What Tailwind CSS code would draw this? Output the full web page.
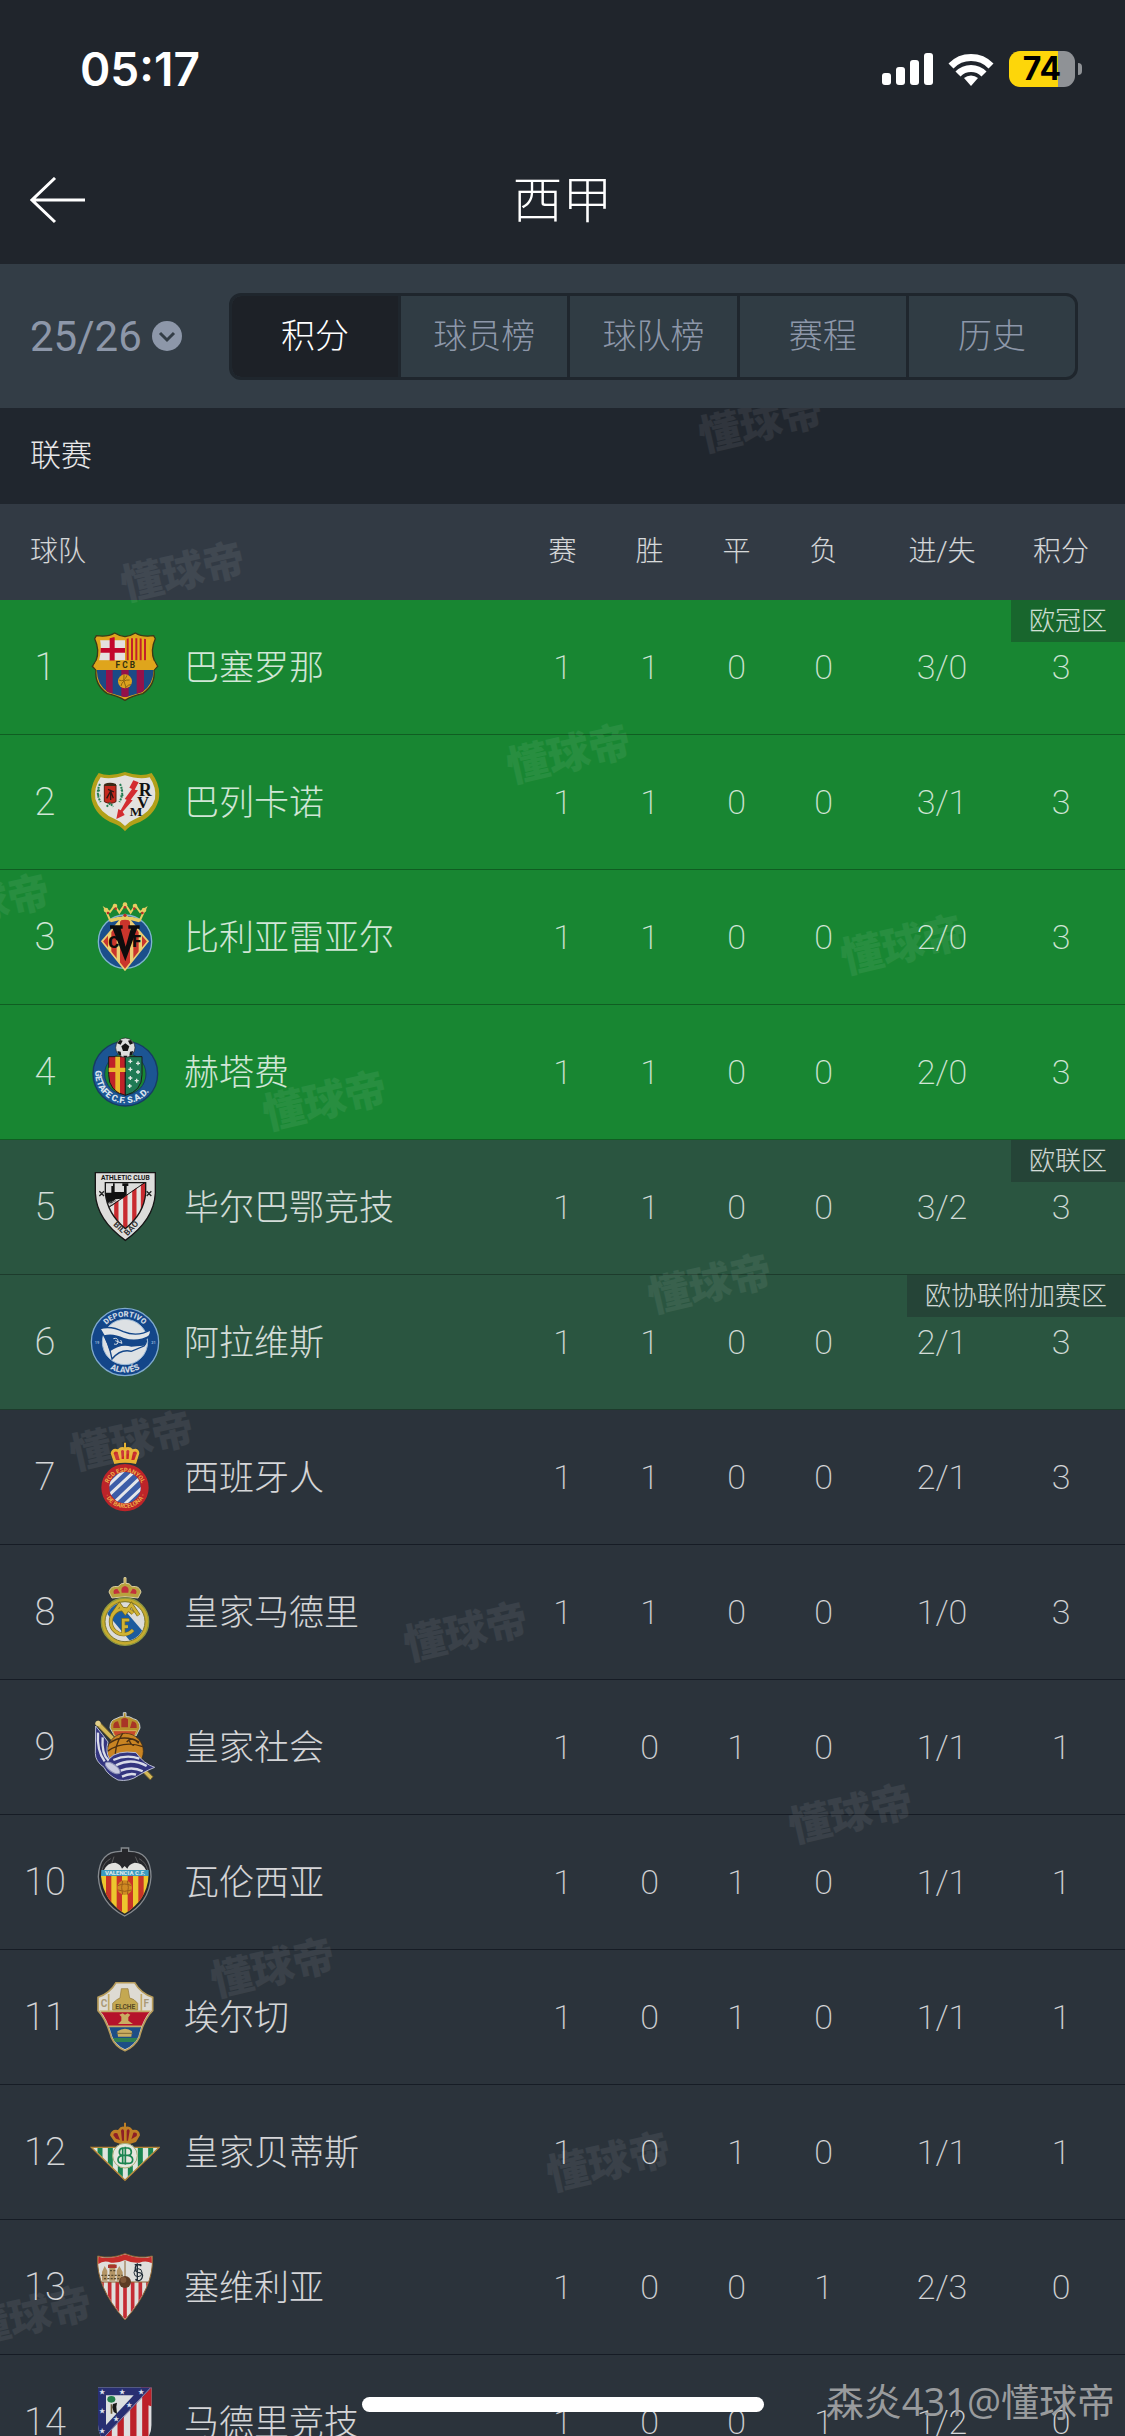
<!DOCTYPE html>
<html lang="zh-CN">
<head>
  <meta charset="UTF-8" />
  <meta name="viewport" content="width=device-width, initial-scale=1" />
  <title>西甲积分榜</title>
  <script src="https://cdn.jsdelivr.net/npm/@tailwindcss/browser@4"></script>
</head>
<body class="bg-[#2b333b] font-['Roboto','Noto_Sans_CJK_SC',sans-serif] font-light text-white">

  <!-- Club crests -->
  <svg class="absolute size-0" xmlns="http://www.w3.org/2000/svg">
    <symbol id="barcelona" viewBox="88 96 210 210">
      <clipPath id="barcelona-clip"><path d="M118 118Q150 118 162 108Q178 112 193 118Q210 112 224 108Q238 118 270 118Q262 150 272 182Q280 192 278 202Q282 250 245 276Q215 286 193 292Q170 286 141 276Q105 250 109 202Q107 192 115 182Q124 150 118 118Z" /></clipPath>
      <path d="M107 107Q142 112 162 99Q176 108 193 110Q210 108 224 99Q244 112 279 107L284 116Q268 150 281 182L291 199L280 210Q285 254 246 281Q215 287 193 301Q170 287 140 281Q101 254 106 210L95 199L106 182Q118 150 102 116Z" fill="#dfa51c" stroke="#3b3a17" stroke-width="4" />
      <g clip-path="url(#barcelona-clip)">
        <path d="M118 121h75v60h-80z" fill="#e4e1df" />
        <path d="M147 112h15v70h-15z M110 144h83v14h-83z" fill="#c3062b" />
        <path d="M196 115h80v66h-80z" fill="#e5ae1c" />
        <path d="M201 115v66M214 115v66M227 115v66M240 115v66M253 115v66" stroke="#c3202a" stroke-width="6" />
        <path d="M100 210h190v90H100z" fill="#1b4a86" />
        <path d="M136 210h20v90h-20z M182 210h22v90h-22z M228 210h22v90h-22z" fill="#94124a" />
      </g>
      <path d="M107 182h173l8 17-9 11H108l-9-11z" fill="#dfa51c" />
      <text x="194" y="204" font-size="25" font-weight="700" text-anchor="middle" fill="#33300f">F C B</text>
      <circle cx="193" cy="244" r="21" fill="#dca31f" />
      <path d="M175 240q16 8 24-14M181 258q4-20 26-18M193 264q12-12 18-10M190 224q-4 18 6 38" fill="none" stroke="#8d6611" stroke-width="3" />
    </symbol>

    <symbol id="rayo" viewBox="88 501 210 210">
      <path d="M114 519Q146 532 193 516Q240 532 273 519Q302 558 294 600Q280 650 228 670Q206 678 193 694Q180 678 158 670Q106 650 93 600Q85 558 114 519Z" fill="#b2a019" />
      <path d="M120 532Q150 540 193 526Q236 540 267 532Q288 562 283 597Q270 638 222 658Q203 666 193 678Q183 666 164 658Q116 638 104 597Q99 562 120 532Z" fill="#e3e1de" />
      <path d="M131 555h35v50q-17 10-35 0z" fill="#c5281d" stroke="#5d1b12" stroke-width="3" />
      <path d="M131 552q17-8 35 0v6h-35z" fill="#3b2a16" />
      <path d="M138 595l12-22 8 22M142 568l18 8M150 570v30" fill="none" stroke="#2e1713" stroke-width="4" />
      <path d="M118 552q-14 28 2 54M178 552q14 28-2 54M112 570l8 4M110 585l10 2M186 570l-8 4M188 585l-10 2M138 620l10-10 10 10" fill="none" stroke="#237d52" stroke-width="6" stroke-dasharray="6 3" />
      <path d="M218 541l16 6-12 22 10 2-22 28 6 2-30 34 6 10-25 12 6-30 7 4 18-32-6-2 22-30-8-4z" fill="#d32c30" />
      <text x="234" y="589" font-family="Liberation Serif" font-size="54" font-weight="700" fill="#111">R</text>
      <text x="229" y="625" font-family="Liberation Serif" font-size="50" font-weight="700" fill="#111">V</text>
      <text x="207" y="648" font-family="Liberation Serif" font-size="40" font-weight="700" fill="#111">M</text>
    </symbol>

    <symbol id="villarreal" viewBox="88 96 210 210">
      <circle cx="193" cy="215" r="80" fill="#1b4f8b" stroke="#7fb4cf" stroke-width="4" />
      <path d="M193 134L262 214L193 300L124 214Z" fill="#c9352c" stroke="#edcf73" stroke-width="5" />
      <clipPath id="villarreal-clip"><path d="M193 134L262 214L193 300L124 214Z" /></clipPath>
      <path clip-path="url(#villarreal-clip)" d="M147 130v170M173 130v170M213 130v170M239 130v170" stroke="#edcf73" stroke-width="10" />
      <path d="M133 116l16 36q44-16 88 0l17-36-16 10-14-20-14 22-17-26-17 26-14-22-14 20z" fill="none" stroke="#e8cd62" stroke-width="6" />
      <path d="M149 152q44-16 88 0" fill="none" stroke="#e8cd62" stroke-width="10" />
      <g fill="#e8cd62"><circle cx="136" cy="120" r="7" /><circle cx="163" cy="108" r="7" /><circle cx="193" cy="104" r="7" /><circle cx="223" cy="108" r="7" /><circle cx="250" cy="120" r="7" /></g>
      <g fill="#b92d28"><circle cx="142" cy="129" r="4" /><circle cx="165" cy="116" r="4" /><circle cx="193" cy="112" r="4" /><circle cx="221" cy="116" r="4" /><circle cx="245" cy="129" r="4" /><circle cx="193" cy="136" r="5" /></g>
      <path d="M148 166h38v10h-6l15 54 15-54h-7v-10h34v10h-8l-35 98-38-98h-8z" fill="#0d0c0c" />
      <text x="143" y="233" font-size="50" font-weight="900" fill="#0d0c0c">C</text>
      <text x="215" y="232" font-size="48" font-weight="900" fill="#0d0c0c">F</text>
    </symbol>

    <symbol id="getafe" viewBox="88 501 210 210">
      <circle cx="194" cy="611" r="97" fill="#1c5593" stroke="#173b62" stroke-width="4" />
      <circle cx="194" cy="612" r="62" fill="#188632" stroke="#173b62" stroke-width="3" />
      <path d="M144 560h50v116q-50-12-50-62z" fill="#bf2228" stroke="#1a1a1a" stroke-width="3" />
      <path d="M194 560h50v54q0 50-50 62z" fill="#1f7a54" stroke="#1a1a1a" stroke-width="3" />
      <path d="M164 560h14v110l-14-10z M144 593h50v13h-50z" fill="#e9b92b" />
      <path d="M203 574h12M209 568v12M226 580h12M232 574v12M203 598h12M209 592v12M226 606h12M232 600v12M203 624h12M209 618v12M222 632h12M228 626v12M201 648h12M207 642v12" stroke="#dfe8e2" stroke-width="4" />
      <circle cx="194" cy="533" r="29" fill="#dedede" stroke="#222" stroke-width="2" />
      <path d="M194 520l12 9-5 14h-14l-5-14zM170 520l8-10 8 2-6 12zM218 520l-8-10-8 2 6 12zM170 543l10 2 2 12-8-3zM218 543l-10 2-2 12 8-3zM188 557h12l-2 5h-8z" fill="#151515" />
      <path id="getafe-arc" d="M106 590A90 90 0 1 0 282 592" fill="none" />
      <text font-size="27" font-weight="900" fill="#d7e3ee"><textPath href="#getafe-arc" startOffset="12">GETAFE C.F. S.A.D.</textPath></text>
    </symbol>

    <symbol id="athletic" viewBox="88 96 210 210">
      <path d="M104 98H284V160Q280 240 194 301Q108 240 104 160Z" fill="#dddddb" stroke="#161616" stroke-width="4" />
      <clipPath id="athletic-clip"><path d="M134 128H255V160Q250 220 194 266Q140 220 134 160Z" /></clipPath>
      <g clip-path="url(#athletic-clip)">
        <path d="M130 120h130v160H130z" fill="#e5e3e1" />
        <path d="M167 160v120M194 150v130M221 140v140M247 120v160" stroke="#c92a2f" stroke-width="13" />
        <path d="M130 120H262L134 208Z" fill="#dcdcdb" />
        <path d="M134 158h18v-20h5v-8h5v26h28v-18h-5v-8h18v8h-5v26l-14 12-20 2-10 12h-20z" fill="#111" />
        <path d="M140 190l26-8M144 199l18-8" stroke="#777" stroke-width="5" stroke-dasharray="3 2" />
        <path d="M258 124L136 208" stroke="#161616" stroke-width="3" />
      </g>
      <path d="M134 128H255V160Q250 220 194 266Q140 220 134 160Z" fill="none" stroke="#161616" stroke-width="4" />
      <text x="194" y="120" font-size="20" font-weight="700" text-anchor="middle" fill="#151515">ATHLETIC CLUB</text>
      <path d="M116 154l14 14M130 154l-14 14M258 154l14 14M272 154l-14 14" stroke="#222" stroke-width="4" />
      <path id="athletic-left" d="M150 248L196 292" fill="none" /><path id="athletic-right" d="M198 292L244 242" fill="none" />
      <g font-size="25" font-weight="700" fill="#333"><text><textPath href="#athletic-left" startOffset="10">BIL</textPath></text><text><textPath href="#athletic-right" startOffset="4">BAO</textPath></text></g>
    </symbol>

    <symbol id="alaves" viewBox="88 501 210 210">
      <circle cx="193" cy="606" r="101" fill="#134689" stroke="#7fa9cd" stroke-width="4" />
      <circle cx="193" cy="606" r="68" fill="#dde1e4" stroke="#9cb9d6" stroke-width="3" />
      <path d="M118 566Q150 556 188 575Q230 592 270 570Q270 592 254 596Q262 604 250 618L212 634Q180 626 154 657Q146 610 118 566Z" fill="#e2e5e7" stroke="#134689" stroke-width="4" />
      <path d="M130 586Q156 578 190 594Q230 606 268 586L256 600Q258 612 248 617Q226 618 212 620Q180 610 148 634Z" fill="#134689" />
      <path d="M158 596q14-4 14 8t-12 8M164 602l20 8-4-10" fill="none" stroke="#d7dee5" stroke-width="3" />
      <path id="alaves-top" d="M117 606A76 76 0 0 1 269 606" fill="none" />
      <path id="alaves-bottom" d="M101 606A92 92 0 0 0 285 606" fill="none" />
      <g font-size="23" font-weight="900" fill="#cbd6e2" text-anchor="middle">
        <text><textPath href="#alaves-top" startOffset="50%">DEPORTIVO</textPath></text>
        <text font-size="25"><textPath href="#alaves-bottom" startOffset="50%">ALAVÉS</textPath></text>
      </g>
      <g font-size="12" font-weight="700" fill="#8fb0d2"><text x="102" y="611">19</text><text x="272" y="611">21</text></g>
    </symbol>

    <symbol id="espanyol" viewBox="88 96 210 210">
      <path d="M161 162L150 130Q154 112 172 118Q180 108 190 112V98h6v14Q208 108 216 118Q234 112 236 130L226 162Q193 154 161 162Z" fill="#e6b231" />
      <path d="M166 150l-7-20q2-8 12-4l6 24zM183 147l-2-24q5-6 9 0v24zM197 147v-24q5-6 9 0l-2 24zM212 150l5-24q10-4 12 4l-8 20z" fill="#c82a2a" />
      <circle cx="193" cy="233" r="71" fill="#bd2429" />
      <clipPath id="espanyol-clip"><circle cx="193" cy="233" r="47" /></clipPath>
      <g clip-path="url(#espanyol-clip)"><path d="M140 180h110v110H140z" fill="#3c5da8" /><path d="M132 236l70-66M138 262l90-84M158 280l84-80M184 290l70-66" stroke="#e4e6ea" stroke-width="9" /></g>
      <path id="espanyol-top" d="M139 240A54 54 0 1 1 247 240" fill="none" />
      <path id="espanyol-bottom" d="M127 228A66 66 0 1 0 259 228" fill="none" />
      <g font-size="18" font-weight="700" fill="#edb24a" text-anchor="middle"><text><textPath href="#espanyol-top" startOffset="50%">RCD ESPANYOL</textPath></text><text><textPath href="#espanyol-bottom" startOffset="50%">· DE BARCELONA ·</textPath></text></g>
    </symbol>

    <symbol id="madrid" viewBox="88 501 210 210">
      <path d="M154 564L145 546Q150 526 172 530Q182 518 190 520V503h6v17Q206 518 214 530Q236 526 241 546L232 564Q193 556 154 564Z" fill="#b9a23e" stroke="#ddd0a0" stroke-width="3" />
      <path d="M160 552q-6-14 10-16l8 14zM183 548q-4-18 10-20 14 2 10 20zM208 550l8-14q16 2 10 16z" fill="#c2303c" />
      <circle cx="193" cy="635" r="71" fill="#c5ab2f" stroke="#8d9740" stroke-width="4" />
      <circle cx="193" cy="635" r="60" fill="#dcdcda" stroke="#7d7729" stroke-width="3" />
      <clipPath id="madrid-clip"><circle cx="193" cy="635" r="58" /></clipPath>
      <path clip-path="url(#madrid-clip)" d="M130 600L166 570L250 668L214 700Z" fill="#1c5b9e" />
      <g fill="none" stroke="#7d6b1c" stroke-width="12"><path d="M217 610A38 38 0 1 0 217 660" /><path d="M154 616l22-32 18 24 18-24 22 32M188 672v-42h16M188 650h12" /></g>
      <g fill="none" stroke="#d0b234" stroke-width="8"><path d="M217 610A38 38 0 1 0 217 660" /><path d="M154 616l22-32 18 24 18-24 22 32M188 674v-44h18M188 650h14" /></g>
    </symbol>

    <symbol id="sociedad" viewBox="88 96 210 210">
      <path d="M104 132l9-10 164 168-8 10z" fill="#d4b857" stroke="#6a5a2c" stroke-width="3" />
      <circle cx="112" cy="130" r="8" fill="#e2cf8b" />
      <path d="M162 168l-14-24q0-24 18-28Q180 108 188 110V98h8v12Q206 108 218 116Q238 120 238 144L226 168Z" fill="#b7902c" stroke="#c9cfd0" stroke-width="3" />
      <path d="M158 144q-2-20 14-20l6 20zM182 142v-24q10-8 20 0v24zM208 144l6-20q16 0 14 20z" fill="#a83426" />
      <path d="M156 152h72l-6 16h-60z" fill="#c94a2c" stroke="#d4b857" stroke-width="3" />
      <circle cx="194" cy="214" r="54" fill="#c98422" stroke="#3a2a16" stroke-width="2" />
      <path d="M146 190q40-30 90-4M140 214q50-34 106-14M186 160q-28 40-20 76M198 186q16-20 36 4M206 182q6 14 14 14" fill="none" stroke="#4b2f12" stroke-width="4" />
      <path d="M105 138Q128 166 142 186Q134 214 146 236Q168 210 226 218Q250 252 282 262Q256 272 234 286Q206 306 172 300Q140 284 130 262Q104 244 104 220Z" fill="#33357f" stroke="#b9bdd2" stroke-width="3" />
      <path d="M112 158q-4 54 20 86M126 172q-4 50 18 70M158 240q40-18 78-4M166 256q46-24 92 2M180 272q36-14 66 2M184 290q24-12 42-6" fill="none" stroke="#d9dce8" stroke-width="7" />
      <ellipse cx="156" cy="264" rx="26" ry="11" transform="rotate(35 156 264)" fill="#c9cbe0" stroke="#8f94b8" stroke-width="3" />
    </symbol>

    <symbol id="valencia" viewBox="88 501 210 210">
      <path d="M182 504h22v10Q270 512 271 590Q266 670 192 708Q118 670 113 590Q116 512 182 514Z" fill="#26272b" stroke="#858a8f" stroke-width="4" />
      <path d="M130 570Q140 548 164 548Q180 552 184 566L192 558L200 566Q204 552 222 548Q246 548 256 570Z" fill="#e2e2df" />
      <path d="M122 570h142v18H121z" fill="#3d9cc0" />
      <clipPath id="valencia-clip"><path d="M121 588H264Q258 662 192 701Q128 662 121 588Z" /></clipPath>
      <g clip-path="url(#valencia-clip)"><path d="M110 586h170v120H110z" fill="#edc62e" /><path d="M144 586v120M176 586v120M209 586v120M241 586v120" stroke="#c93427" stroke-width="16" /></g>
      <text x="193" y="585" font-size="18" font-weight="900" text-anchor="middle" fill="#d8e6ea">VALENCIA C.F.</text>
      <circle cx="192" cy="623" r="22" fill="#d08a22" />
      <path d="M172 617q20-10 40 0M172 630q20 8 40 0M186 602q-6 20 0 42M200 602q6 20 0 42" fill="none" stroke="#9b5d18" stroke-width="3" />
      <path d="M150 536q-20 10-26 34M235 536q20 10 26 34M160 530l-6 18M224 530l8 18" fill="none" stroke="#777" stroke-width="2" />
    </symbol>

    <symbol id="elche" viewBox="88 96 210 210">
      <path d="M166 98H222Q240 130 276 142V182Q250 206 236 262Q222 290 193 302Q164 290 152 262Q136 206 112 182V142Q148 130 166 98Z" fill="#dedbd3" stroke="#b79c5b" stroke-width="5" />
      <clipPath id="elche-clip"><path d="M116 180H272Q246 206 233 260Q219 287 193 298Q167 287 155 260Q140 206 116 180Z" /></clipPath>
      <g clip-path="url(#elche-clip)">
        <path d="M110 186h170v42H110z" fill="#b5122b" />
        <path d="M110 230h170v80H110z" fill="#1d4e86" />
        <path d="M110 264h170v12H110z" fill="#2f8050" />
        <path d="M110 184h170M110 229h170" stroke="#c3a965" stroke-width="5" />
      </g>
      <path d="M144 132v50M242 132v50" stroke="#c3a965" stroke-width="5" />
      <path d="M156 160q14-14 22-16l4-28h20l5 28q14 2 24 16v20h-75z" fill="#c4a851" stroke="#94793a" stroke-width="2" />
      <path d="M172 222l10-10v-12l-6-6 10-4 7 4 8-4 8 4-6 8v10l14 10zM170 244q24-16 44 0l-2 16h-40z" fill="#c9ad62" />
      <path d="M168 250h48" stroke="#806a35" stroke-width="3" />
      <g font-weight="700" font-size="30" fill="#aa9a79" text-anchor="middle"><text x="130" y="171">C</text><text x="257" y="171">F</text><text x="194" y="176" font-size="20" fill="#594b25">ELCHE</text></g>
    </symbol>

    <symbol id="betis" viewBox="88 501 210 210">
      <path d="M162 576L148 556Q152 536 172 540Q180 528 190 530V518h6v12Q208 528 216 540Q236 536 238 556L226 576Q193 590 162 576Z" fill="#bf7f25" />
      <path d="M166 566l-8-10q0-10 12-6l8 20zM184 572l-3-30q5-8 9 0v30zM198 572v-30q5-8 9 0l-5 30zM212 568l6-20q14-2 10 10z" fill="#8d1f26" />
      <path d="M92 592H296L193 691Z" fill="#dfe5df" />
      <clipPath id="betis-clip"><path d="M97 594H291L193 688Z" /></clipPath>
      <path clip-path="url(#betis-clip)" d="M118 590v110M149 590v110M179 590v110M209 590v110M239 590v110M270 590v110" stroke="#1b8450" stroke-width="15" />
      <path d="M92 592H296L193 691Z" fill="none" stroke="#b48435" stroke-width="4" />
      <circle cx="193" cy="617" r="37" fill="#e5e7df" stroke="#a7ae78" stroke-width="3" />
      <g fill="none" stroke="#1b8450" stroke-width="5"><path d="M186 594h16q10 2 10 12t-10 10q14 2 14 13t-14 11h-16zM202 594h-16q-10 2-10 12t10 10q-14 2-14 13t14 11h16M180 616h30M194 590v54" /></g>
    </symbol>

    <symbol id="sevilla" viewBox="88 96 210 210">
      <path d="M111 108Q150 118 193 101Q236 118 275 108Q282 200 193 300Q104 200 111 108Z" fill="#dfdfdc" stroke="#8c6432" stroke-width="3" />
      <clipPath id="sevilla-clip"><path d="M113 110Q150 120 193 103Q236 120 273 110Q280 200 193 297Q106 200 113 110Z" /></clipPath>
      <g clip-path="url(#sevilla-clip)">
        <path d="M110 100h170v34q-20-16-44-6-22 2-43-8-20 10-42 8-22-10-41 6z" fill="#c52d2a" />
        <path d="M124 186v114M147 186v114M170 186v114M193 186v114M216 186v114M239 186v114M262 186v114" stroke="#c52d35" stroke-width="11" />
        <path d="M100 186H285M193 122v64" stroke="#8c6432" stroke-width="3" />
      </g>
      <path d="M124 182v-26l8-18 8 14v30zM146 182v-50h18v50zM168 182v-30l8-14 10 18v26z" fill="#b49565" />
      <path d="M142 134h26v10h-26z" fill="#a9352b" />
      <path d="M122 166h64M130 176h50M148 152h16" stroke="#594b31" stroke-width="4" stroke-dasharray="6 4" />
      <path d="M242 138q-16-10-18 4t12 16 8 16-20 4M230 130v50M222 134h20" fill="none" stroke="#222e38" stroke-width="4" />
      <circle cx="232" cy="158" r="12" fill="none" stroke="#222e38" stroke-width="3" />
      <circle cx="193" cy="186" r="18" fill="#5c3b24" /><circle cx="188" cy="180" r="9" fill="#80583a" />
    </symbol>

    <symbol id="atletico" viewBox="88 96 210 210">
      <clipPath id="atletico-clip"><path d="M112 97H273V210Q270 270 193 302Q114 270 112 210Z" /></clipPath>
      <g clip-path="url(#atletico-clip)">
        <path d="M110 96h165v210H110z" fill="#dedee0" />
        <path d="M144 210v100M180 175v130M218 140v170M254 110v200" stroke="#bd2029" stroke-width="19" />
        <path d="M240 96h40v60l-20-6z" fill="#bd2029" />
        <path d="M110 96H274L112 268Z" fill="#282f72" />
        <path d="M136 121H219L136 210Z" fill="#dcdfe0" />
        <path d="M150 148h5v28h-5z" fill="#6a5b3b" /><ellipse cx="152" cy="133" rx="12" ry="10" fill="#237e4b" />
        <path d="M157 147l12-4-2 12 2 22-10-6-4-14z" fill="#181818" />
        <path d="M270 98L112 266" stroke="#c9b9c7" stroke-width="2" />
      </g>
      <g fill="#dfe1ee" font-size="19" text-anchor="middle" font-family="DejaVu Sans"><text x="124" y="116">★</text><text x="183" y="116">★</text><text x="242" y="116">★</text><text x="124" y="175">★</text><text x="124" y="234">★</text><text x="206" y="157">★</text><text x="166" y="197">★</text></g>
    </symbol>
  </svg>

  <div class="relative flex h-screen flex-col overflow-hidden">
    <header class="bg-[#20252c]">
      <div class="flex h-[138px] items-center justify-between pl-20 pr-[43px]">
        <span class="font-['Inter',sans-serif] text-[46px] font-semibold">05:17</span>
        <div class="flex items-center gap-[15px]">
          <svg class="h-8 w-[51px]" viewBox="0 0 51 32" fill="white">
            <rect y="20" width="9" height="12" rx="3" /><rect x="14" y="14" width="9" height="18" rx="3" /><rect x="28" y="7" width="9" height="25" rx="3" /><rect x="42" width="9" height="32" rx="3" />
          </svg>
          <svg class="h-[33px] w-[46px]" viewBox="0 0 46 33" fill="none" stroke="white" stroke-width="7">
            <path d="M3 13a28 28 0 0 1 40 0" /><path d="M10 21a18 18 0 0 1 26 0" /><path d="M23 33l-7-8a11 11 0 0 1 14 0z" fill="white" stroke="none" />
          </svg>
          <div class="flex items-center gap-[3px]">
            <div class="flex h-9 w-[66px] items-center justify-center rounded-[11px] bg-linear-to-r from-[#fdd60a] from-74% to-[#8f9296] to-74% font-['Inter',sans-serif] text-[32px] font-bold text-black">74</div>
            <div class="h-3 w-1 rounded-r-full bg-[#8f9296]"></div>
          </div>
        </div>
      </div>
      <nav class="grid h-[126px] grid-cols-3 items-center px-[30px]">
        <button type="button" aria-label="返回" class="w-14">
          <svg class="h-12 w-14" viewBox="0 0 56 48" fill="none" stroke="white" stroke-width="3"><path d="M55 23H3M25 1L2 23L25 45" /></svg>
        </button>
        <h1 class="text-center text-[50px] font-light">西甲</h1>
      </nav>
    </header>

    <div class="flex h-36 shrink-0 items-center bg-[#333d46] pl-[30px] pr-[47px]">
      <div class="relative w-[199px] text-[#8d97a9]">
        <label for="season" class="sr-only">赛季</label>
        <select id="season" class="w-[156px] appearance-none bg-transparent text-[42px] font-normal">
          <option>25/26</option>
        </select>
        <svg class="pointer-events-none absolute left-[122px] top-1/2 size-[30px] -translate-y-1/2" viewBox="0 0 30 30"><circle cx="15" cy="15" r="15" fill="#8d97a9" /><path d="M8 12l7 7 7-7" fill="none" stroke="#333d46" stroke-width="3" /></svg>
      </div>
      <div class="flex h-[87px] flex-1 divide-x-3 divide-[#1f262d] overflow-hidden rounded-xl border-3 border-[#1f262d] bg-[#303c44] text-[34px] text-[#8d97a9]">
        <button type="button" class="flex-1 bg-[#1d2127] text-white">积分</button>
        <button type="button" class="flex-1">球员榜</button>
        <button type="button" class="flex-1">球队榜</button>
        <button type="button" class="flex-1">赛程</button>
        <button type="button" class="flex-1">历史</button>
      </div>
    </div>

    <main class="relative overflow-hidden">
      <h2 class="flex h-24 items-center bg-[#20262e] px-[30px] text-[31px] font-light text-white/90">联赛</h2>
      <table class="w-full table-fixed border-separate border-spacing-0 text-center text-white/80">
        <colgroup>
          <col class="w-[90px]" /><col class="w-[94px]" /><col />
          <col class="w-[87px]" /><col class="w-[87px]" /><col class="w-[87px]" /><col class="w-[87px]" />
          <col class="w-[150px]" /><col class="w-[108px]" />
        </colgroup>
        <thead class="bg-[#323a44] text-[28px]">
          <tr class="h-24">
            <th colspan="3" class="pl-[30px] text-left font-light">球队</th>
            <th class="font-light">赛</th>
            <th class="font-light">胜</th>
            <th class="font-light">平</th>
            <th class="font-light">负</th>
            <th class="font-light">进/失</th>
            <th class="pr-5 font-light">积分</th>
          </tr>
        </thead>
        <tbody id="standings" class="text-[34px] font-extralight"></tbody>
      </table>

      <!-- Repeating brand mark -->
      <div aria-hidden="true" class="pointer-events-none absolute inset-0 text-[42px] leading-[60px] font-black text-white/7">
        <span class="absolute left-[698px] top-[-14px] -rotate-13">懂球帝</span>
        <span class="absolute left-[120px] top-[135px] -rotate-13">懂球帝</span>
        <span class="absolute left-[506px] top-[317px] -rotate-13">懂球帝</span>
        <span class="absolute left-[-75px] top-[467px] -rotate-13">懂球帝</span>
        <span class="absolute left-[840px] top-[508px] -rotate-13">懂球帝</span>
        <span class="absolute left-[262px] top-[664px] -rotate-13">懂球帝</span>
        <span class="absolute left-[647px] top-[847px] -rotate-13">懂球帝</span>
        <span class="absolute left-[69px] top-[1004px] -rotate-13">懂球帝</span>
        <span class="absolute left-[403px] top-[1195px] -rotate-13">懂球帝</span>
        <span class="absolute left-[788px] top-[1377px] -rotate-13">懂球帝</span>
        <span class="absolute left-[210px] top-[1531px] -rotate-13">懂球帝</span>
        <span class="absolute left-[546px] top-[1725px] -rotate-13">懂球帝</span>
        <span class="absolute left-[-33px] top-[1879px] -rotate-13">懂球帝</span>
      </div>
    </main>

    <div class="absolute bottom-6 left-1/2 h-[15px] w-[402px] -translate-x-1/2 rounded-full bg-white"></div>
    <p class="absolute right-[10px] bottom-[6px] font-['Open_Sans','Noto_Sans_CJK_SC',sans-serif] text-[38px] font-normal text-[#999b9d]">森炎431@懂球帝</p>
  </div>

  <script>
    const teams = [
      ["barcelona", "巴塞罗那", 1, 1, 0, 0, "3/0", 3, "欧冠区"],
      ["rayo", "巴列卡诺", 1, 1, 0, 0, "3/1", 3],
      ["villarreal", "比利亚雷亚尔", 1, 1, 0, 0, "2/0", 3],
      ["getafe", "赫塔费", 1, 1, 0, 0, "2/0", 3],
      ["athletic", "毕尔巴鄂竞技", 1, 1, 0, 0, "3/2", 3, "欧联区"],
      ["alaves", "阿拉维斯", 1, 1, 0, 0, "2/1", 3, "欧协联附加赛区"],
      ["espanyol", "西班牙人", 1, 1, 0, 0, "2/1", 3],
      ["madrid", "皇家马德里", 1, 1, 0, 0, "1/0", 3],
      ["sociedad", "皇家社会", 1, 0, 1, 0, "1/1", 1],
      ["valencia", "瓦伦西亚", 1, 0, 1, 0, "1/1", 1],
      ["elche", "埃尔切", 1, 0, 1, 0, "1/1", 1],
      ["betis", "皇家贝蒂斯", 1, 0, 1, 0, "1/1", 1],
      ["sevilla", "塞维利亚", 1, 0, 0, 1, "2/3", 0],
      ["atletico", "马德里竞技", 1, 0, 0, 1, "1/2", 0],
    ];

    function rowColor(rank) {
      if (rank <= 4) return "bg-[#188632]";
      if (rank <= 6) return "bg-[#2a5540]";
      return "bg-[#2b333b]";
    }

    document.getElementById("standings").innerHTML = teams.map((team, i) => {
      const [logo, name, played, won, drawn, lost, goals, points, zone] = team;
      const line = i < 6 ? "border-b border-black/30" : "border-b border-[#161c25]";
      const badge = zone
        ? `<span class="absolute top-0 right-0 flex h-[42px] items-center whitespace-nowrap bg-[#1c1e26]/30 px-[18px] text-[26px] font-light">${zone}</span>`
        : "";
      return `
        <tr class="h-[135px] ${rowColor(i + 1)}">
          <td class="${line} text-[38px]">${i + 1}</td>
          <td class="${line}"><svg class="size-[70px]" role="img" aria-label="${name}"><use href="#${logo}" /></svg></td>
          <td class="${line} pt-1 text-left text-[35px] font-light">${name}</td>
          <td class="${line}">${played}</td>
          <td class="${line}">${won}</td>
          <td class="${line}">${drawn}</td>
          <td class="${line}">${lost}</td>
          <td class="${line}">${goals}</td>
          <td class="${line} relative pr-5">${points}${badge}</td>
        </tr>`;
    }).join("");
  </script>
</body>
</html>
